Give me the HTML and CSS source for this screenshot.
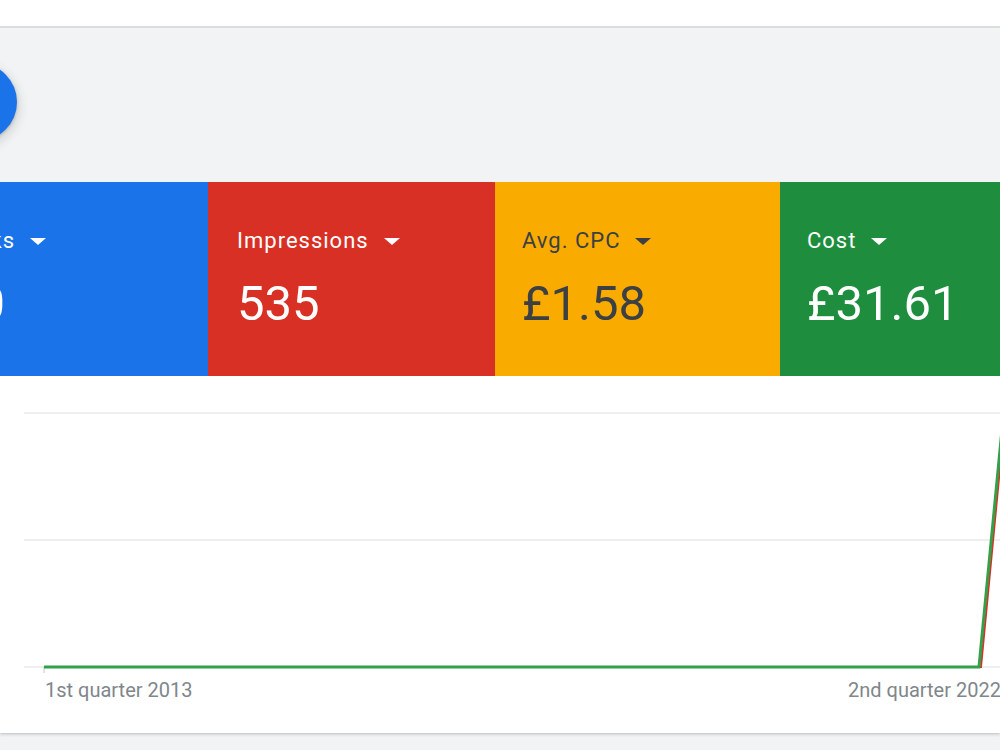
FILE: index.html
```html
<!DOCTYPE html>
<html lang="en">
<head>
    <meta charset="UTF-8">
    <meta name="viewport" content="width=device-width, initial-scale=1.0">
    <title>Overview - Performance</title>
    <link rel="stylesheet" href="styles.css">
</head>
<body>
    <div class="topbar"></div>
    <div class="toolbar">
        <button class="fab" aria-label="New"></button>
    </div>
    <div class="scorecards">
        <div class="card card-blue">
            <div class="card-label">Clicks <span class="drop"></span></div>
            <div class="card-value">20</div>
        </div>
        <div class="card card-red">
            <div class="card-label">Impressions <span class="drop"></span></div>
            <div class="card-value">535</div>
        </div>
        <div class="card card-yellow">
            <div class="card-label">Avg. CPC <span class="drop"></span></div>
            <div class="card-value">£1.58</div>
        </div>
        <div class="card card-green">
            <div class="card-label">Cost <span class="drop"></span></div>
            <div class="card-value">£31.61</div>
        </div>
    </div>
    <div class="chart">
        <svg class="plot" width="1000" height="302" viewBox="0 0 1000 302">
            <!-- grid -->
            <line x1="24" y1="37" x2="1000" y2="37" class="grid"/>
            <line x1="24" y1="164" x2="1000" y2="164" class="grid"/>
            <line x1="24" y1="291" x2="1000" y2="291" class="grid"/>
            <line x1="44" y1="291" x2="44" y2="297" class="tick"/>
            <!-- series -->
            <polyline points="44,291 981,291 1003,60" class="series-red"/>
            <polyline points="44,291 979,291 1000,74 1003,43" class="series-green"/>
        </svg>
        <div class="axis">
            <span>1st quarter 2013</span>
            <span>2nd quarter 2022</span>
        </div>
    </div>
</body>
</html>
```

FILE: styles.css
```css
body {
    margin: 0;
    padding: 0;
    background-color: #f1f3f4;
    font-family: Roboto, "Liberation Sans", Arial, sans-serif;
    overflow: hidden;
    width: 1000px;
    height: 750px;
}
.topbar {
    height: 26px;
    background: #fff;
}
.toolbar {
    height: 156px;
    border-top: 2px solid #dadce0;
    background-color: #f1f3f4;
    padding-top: 35px;
    box-sizing: border-box;
}
.fab {
    display: block;
    width: 78px;
    height: 78px;
    margin-left: -61px;
    border: none;
    border-radius: 50%;
    background-color: #1a73e8;
    box-shadow: 0 1px 3px rgba(60, 64, 67, 0.3), 0 4px 10px 3px rgba(60, 64, 67, 0.15);
    cursor: pointer;
}
.scorecards {
    display: flex;
    margin-left: -79px;
    height: 194px;
}
.card {
    flex: none;
    width: 285px;
    padding: 45px 0 0 29px;
    box-sizing: border-box;
    color: #fff;
}
.card-blue {
    width: 287px;
    background-color: #1a73e8;
}
.card-red {
    width: 287px;
    background-color: #d93025;
}
.card-yellow {
    background-color: #f9ab00;
    color: #3c4043;
    padding-left: 27px;
}
.card-green {
    width: 300px;
    background-color: #1e8e3e;
    padding-left: 27px;
}
.card-label {
    display: flex;
    align-items: center;
    font-size: 22px;
    line-height: 28px;
    letter-spacing: 1px;
    white-space: nowrap;
}
.drop {
    width: 0;
    height: 0;
    margin-left: 15px;
    border-left: 8px solid transparent;
    border-right: 8px solid transparent;
    border-top: 7px solid currentColor;
}
.card-value {
    margin-top: 21px;
    font-size: 49px;
    line-height: 56px;
    white-space: nowrap;
}
.chart {
    height: 357px;
    background: #fff;
    box-shadow: 0 1px 3px rgba(60, 64, 67, 0.3);
}
.plot {
    display: block;
}
.grid {
    stroke: #e8e8e8;
    stroke-width: 1.5;
}
.tick {
    stroke: #c8c8c8;
    stroke-width: 1;
}
.series-red {
    fill: none;
    stroke: #d93025;
    stroke-width: 2;
}
.series-green {
    fill: none;
    stroke: #34a04a;
    stroke-width: 3;
}
.axis {
    display: grid;
    grid-template-columns: 803px auto;
    padding-left: 45px;
    font-size: 20px;
    line-height: 24px;
    color: #80868b;
    white-space: nowrap;
}
```
